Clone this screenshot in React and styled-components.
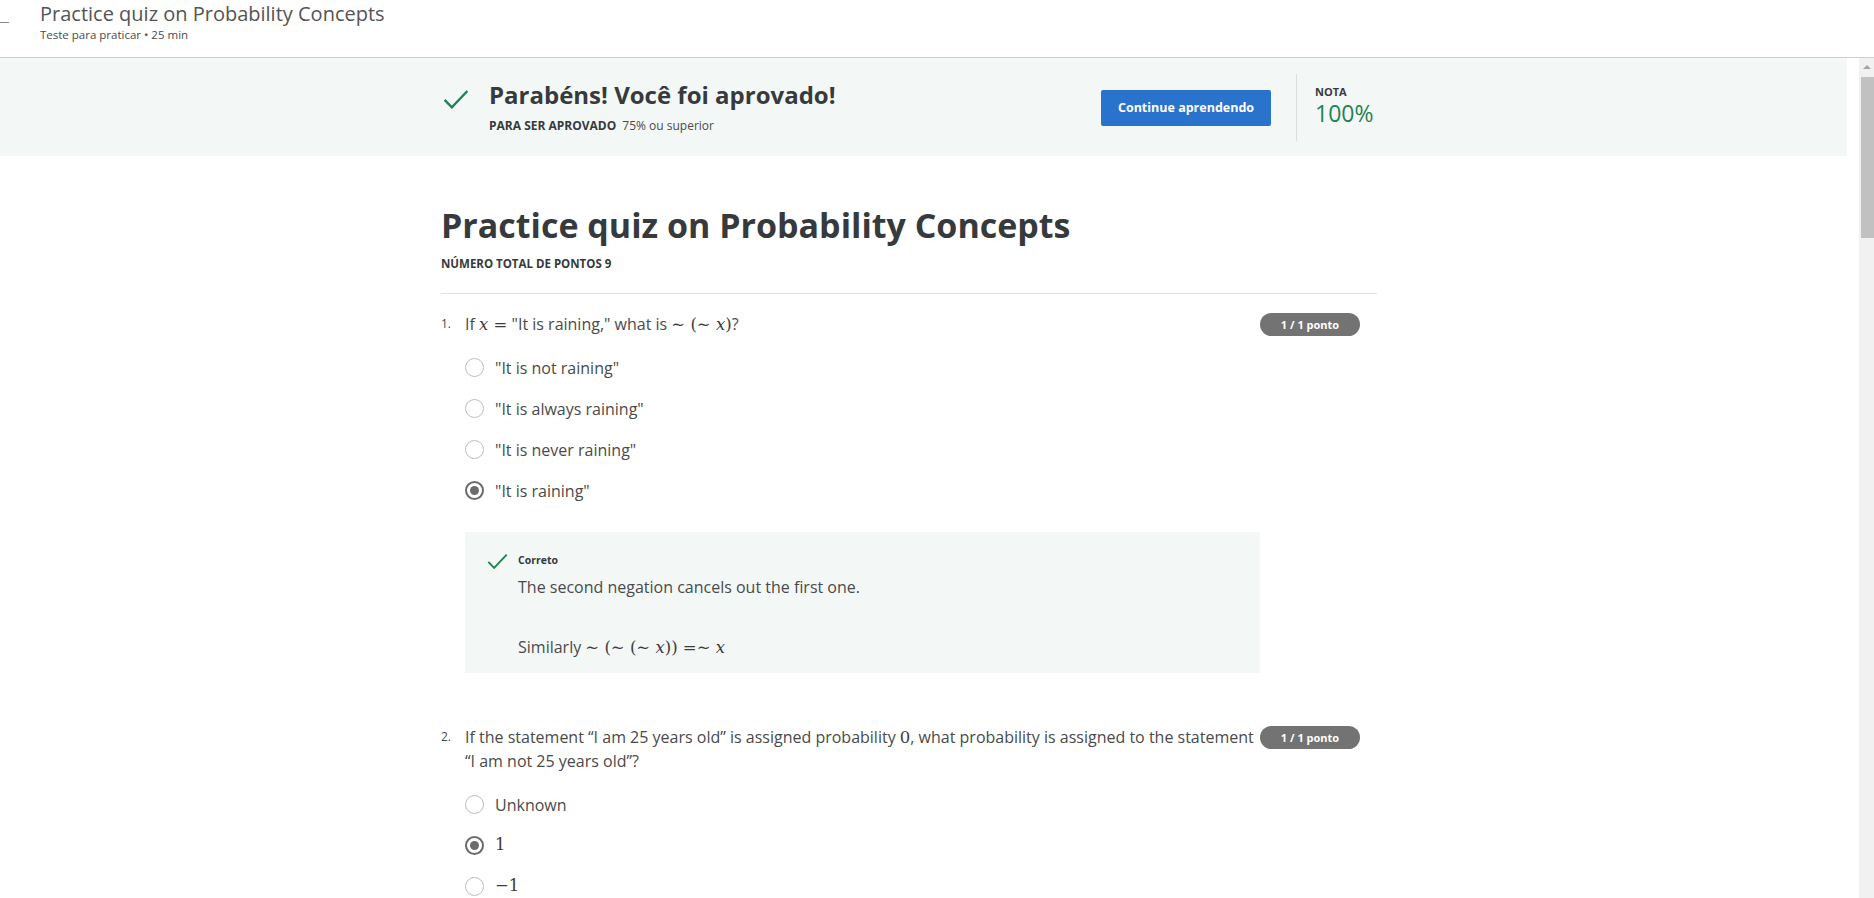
import styled, { createGlobalStyle } from "styled-components"

const GlobalStyle = createGlobalStyle`
  html, body {
    margin: 0;
    padding: 0;
    height: 100%;
    overflow: hidden;
    background: #fff;
  }
  body {
    font-family: "Open Sans", "Liberation Sans", sans-serif;
    color: #373a3c;
  }
  * { box-sizing: border-box; }
`

const Page = styled.div`
  height: 100vh;
  display: flex;
  flex-direction: column;
`

const TopBar = styled.header`
  height: 58px;
  flex-shrink: 0;
  display: flex;
  align-items: flex-start;
  border-bottom: 1px solid #cfcfcf;
`

const Dash = styled.span`
  width: 9px;
  height: 1px;
  background: #8a8a8a;
  margin: 22px 0 0 0;
`

const TitleBlock = styled.div`
  display: flex;
  flex-direction: column;
  margin-left: 31px;
  padding-top: 1px;
`

const TopTitle = styled.div`
  font-size: 20px;
  line-height: 26px;
  color: #545454;
`

const TopSub = styled.div`
  font-size: 11.5px;
  line-height: 15px;
  color: #4a4a4a;
`

const Body = styled.div`
  flex: 1;
  min-height: 0;
  display: flex;
`

const Scroller = styled.div`
  flex: 1;
  overflow: hidden;
`

const ScrollTrack = styled.div`
  width: 15px;
  flex-shrink: 0;
  background: #f1f1f1;
  display: flex;
  flex-direction: column;
  align-items: center;
`

const ScrollArrow = styled.div`
  height: 17px;
  display: flex;
  align-items: center;
  justify-content: center;
  &::before {
    content: "";
    border-left: 4px solid transparent;
    border-right: 4px solid transparent;
    border-bottom: 4px solid #a3a3a3;
  }
`

const ScrollThumb = styled.div`
  width: 13px;
  height: 161px;
  margin-top: 2px;
  margin-left: 2px;
  background: #c1c1c1;
`

const Banner = styled.section`
  background: #f3f8f7;
  height: 98px;
  width: 1847px;
  padding-right: 29px;
`

const Column = styled.div`
  width: 936px;
  margin: 0 auto;
`

const Main = styled.div`
  padding-right: 41px;
`

const BannerRow = styled(Column)`
  height: 100%;
  display: flex;
  align-items: center;
`

const PassGroup = styled.div`
  flex: 1;
  display: flex;
  align-items: flex-start;
  padding-bottom: 2px;
`

const CheckIcon = ({ size = 26 }) => (
  <svg width={size} height={size * 0.8} viewBox="0 0 26 21" fill="none">
    <path d="M1.5 11 L8.8 18.5 L24.5 2" stroke="#1f8354" strokeWidth="2.4" />
  </svg>
)

const BigCheck = styled.span`
  margin: 10px 20px 0 2px;
  display: flex;
`

const PassText = styled.div`
  display: flex;
  flex-direction: column;
`

const PassTitle = styled.h2`
  margin: 0;
  font-size: 24px;
  line-height: 32px;
  font-weight: 700;
  color: #373a3c;
`

const PassSub = styled.div`
  font-size: 12px;
  line-height: 16px;
  margin-top: 7px;
  color: #4a4a4a;
  b {
    font-weight: 700;
    color: #373a3c;
    margin-right: 6px;
  }
`

const Button = styled.button`
  width: 170px;
  height: 36px;
  border: none;
  border-radius: 2px;
  background: #2a73cc;
  color: #fff;
  font-family: inherit;
  font-size: 12.5px;
  font-weight: 700;
  margin-top: 1px;
`

const VDivider = styled.div`
  width: 1px;
  height: 67px;
  background: #dcdcdc;
  margin: 0 18px 0 25px;
`

const Grade = styled.div`
  width: 62px;
  display: flex;
  flex-direction: column;
  padding-bottom: 2px;
`

const GradeLabel = styled.div`
  font-size: 11px;
  font-weight: 700;
  line-height: 14px;
  color: #373a3c;
`

const GradeValue = styled.div`
  font-size: 23px;
  line-height: 28px;
  color: #1f8354;
`

const QuizHead = styled.div`
  padding-top: 47px;
  border-bottom: 1px solid #e0e0e0;
  padding-bottom: 22px;
`

const QuizTitle = styled.h1`
  margin: 0;
  font-size: 34px;
  line-height: 45px;
  font-weight: 700;
  color: #373a3c;
`

const Points = styled.div`
  margin-top: 9px;
  font-size: 11.5px;
  line-height: 14px;
  font-weight: 700;
  color: #373a3c;
`

const Question = styled.div`
  padding-top: ${p => p.$top}px;
`

const QRow = styled.div`
  display: flex;
  align-items: flex-start;
  padding-right: 17px;
`

const QNum = styled.div`
  width: 24px;
  font-size: 12px;
  line-height: 24px;
  color: #4a4a4a;
`

const QText = styled.div`
  flex: 1;
  font-size: 16px;
  line-height: 24px;
  color: #4a4a4a;
  padding-right: 6px;
`

const Badge = styled.div`
  flex-shrink: 0;
  width: 100px;
  height: 23px;
  margin-top: 1px;
  border-radius: 12px;
  background: #737373;
  color: #fff;
  font-size: 11px;
  font-weight: 700;
  display: flex;
  align-items: center;
  justify-content: center;
`

const Options = styled.div`
  padding-left: 24px;
  margin-top: 11px;
  display: flex;
  flex-direction: column;
`

const Option = styled.label`
  display: flex;
  align-items: center;
  height: 41px;
  font-size: 16px;
  color: #4a4a4a;
`

const Radio = styled.span`
  width: 19px;
  height: 19px;
  border-radius: 50%;
  border: ${p => (p.$checked ? "2px solid #6b6b6b" : "1.5px solid #bdbdbd")};
  margin-right: 11px;
  display: flex;
  align-items: center;
  justify-content: center;
  &::after {
    content: "";
    display: ${p => (p.$checked ? "block" : "none")};
    width: 9px;
    height: 9px;
    border-radius: 50%;
    background: #6b6b6b;
  }
`

const Math = styled.span`
  font-family: "DejaVu Serif", "Liberation Serif", serif;
  font-size: 16.5px;
  line-height: 1;
  color: #3c3c3c;
  i { font-style: italic; }
`

const Feedback = styled.div`
  margin: 21px 0 0 24px;
  width: 795px;
  background: #f3f8f7;
  padding: 21px 20px 13px 22px;
  display: flex;
  align-items: flex-start;
`

const SmallCheck = styled.span`
  display: flex;
  margin-right: 10px;
`

const FeedbackBody = styled.div`
  display: flex;
  flex-direction: column;
`

const FeedbackLabel = styled.div`
  font-size: 10.5px;
  font-weight: 700;
  line-height: 14px;
  color: #373a3c;
  margin-bottom: 7px;
`

const FeedbackText = styled.p`
  margin: 0 0 ${p => p.$gap || 0}px 0;
  font-size: 16px;
  line-height: 26px;
  color: #4a4a4a;
`

const X = () => <i>x</i>

export default function App() {
  return (
    <Page>
      <GlobalStyle />
      <TopBar>
        <Dash />
        <TitleBlock>
          <TopTitle>Practice quiz on Probability Concepts</TopTitle>
          <TopSub>Teste para praticar • 25 min</TopSub>
        </TitleBlock>
      </TopBar>
      <Body>
        <Scroller>
          <Banner>
            <BannerRow>
              <PassGroup>
                <BigCheck><CheckIcon size={26} /></BigCheck>
                <PassText>
                  <PassTitle>Parabéns! Você foi aprovado!</PassTitle>
                  <PassSub><b>PARA SER APROVADO</b>75% ou superior</PassSub>
                </PassText>
              </PassGroup>
              <Button>Continue aprendendo</Button>
              <VDivider />
              <Grade>
                <GradeLabel>NOTA</GradeLabel>
                <GradeValue>100%</GradeValue>
              </Grade>
            </BannerRow>
          </Banner>
          <Main>
            <Column>
              <QuizHead>
                <QuizTitle>Practice quiz on Probability Concepts</QuizTitle>
                <Points>NÚMERO TOTAL DE PONTOS 9</Points>
              </QuizHead>

              <Question $top={18}>
                <QRow>
                  <QNum>1.</QNum>
                  <QText>
                    If <Math><X /> =</Math> "It is raining," what is <Math>∼ (∼ <X />)</Math>?
                  </QText>
                  <Badge>1 / 1 ponto</Badge>
                </QRow>
                <Options>
                  <Option><Radio />"It is not raining"</Option>
                  <Option><Radio />"It is always raining"</Option>
                  <Option><Radio />"It is never raining"</Option>
                  <Option><Radio $checked />"It is raining"</Option>
                </Options>
                <Feedback>
                  <SmallCheck><CheckIcon size={21} /></SmallCheck>
                  <FeedbackBody>
                    <FeedbackLabel>Correto</FeedbackLabel>
                    <FeedbackText $gap={34}>The second negation cancels out the first one.</FeedbackText>
                    <FeedbackText>
                      Similarly <Math>∼ (∼ (∼ <X />)) =∼ <X /></Math>
                    </FeedbackText>
                  </FeedbackBody>
                </Feedback>
              </Question>

              <Question $top={52}>
                <QRow>
                  <QNum>2.</QNum>
                  <QText>
                    If the statement “I am 25 years old” is assigned probability <Math>0</Math>, what probability is assigned to the statement “I am not 25 years old”?
                  </QText>
                  <Badge>1 / 1 ponto</Badge>
                </QRow>
                <Options>
                  <Option><Radio />Unknown</Option>
                  <Option><Radio $checked /><Math>1</Math></Option>
                  <Option><Radio /><Math>−1</Math></Option>
                </Options>
              </Question>
            </Column>
          </Main>
        </Scroller>
        <ScrollTrack>
          <ScrollArrow />
          <ScrollThumb />
        </ScrollTrack>
      </Body>
    </Page>
  )
}
